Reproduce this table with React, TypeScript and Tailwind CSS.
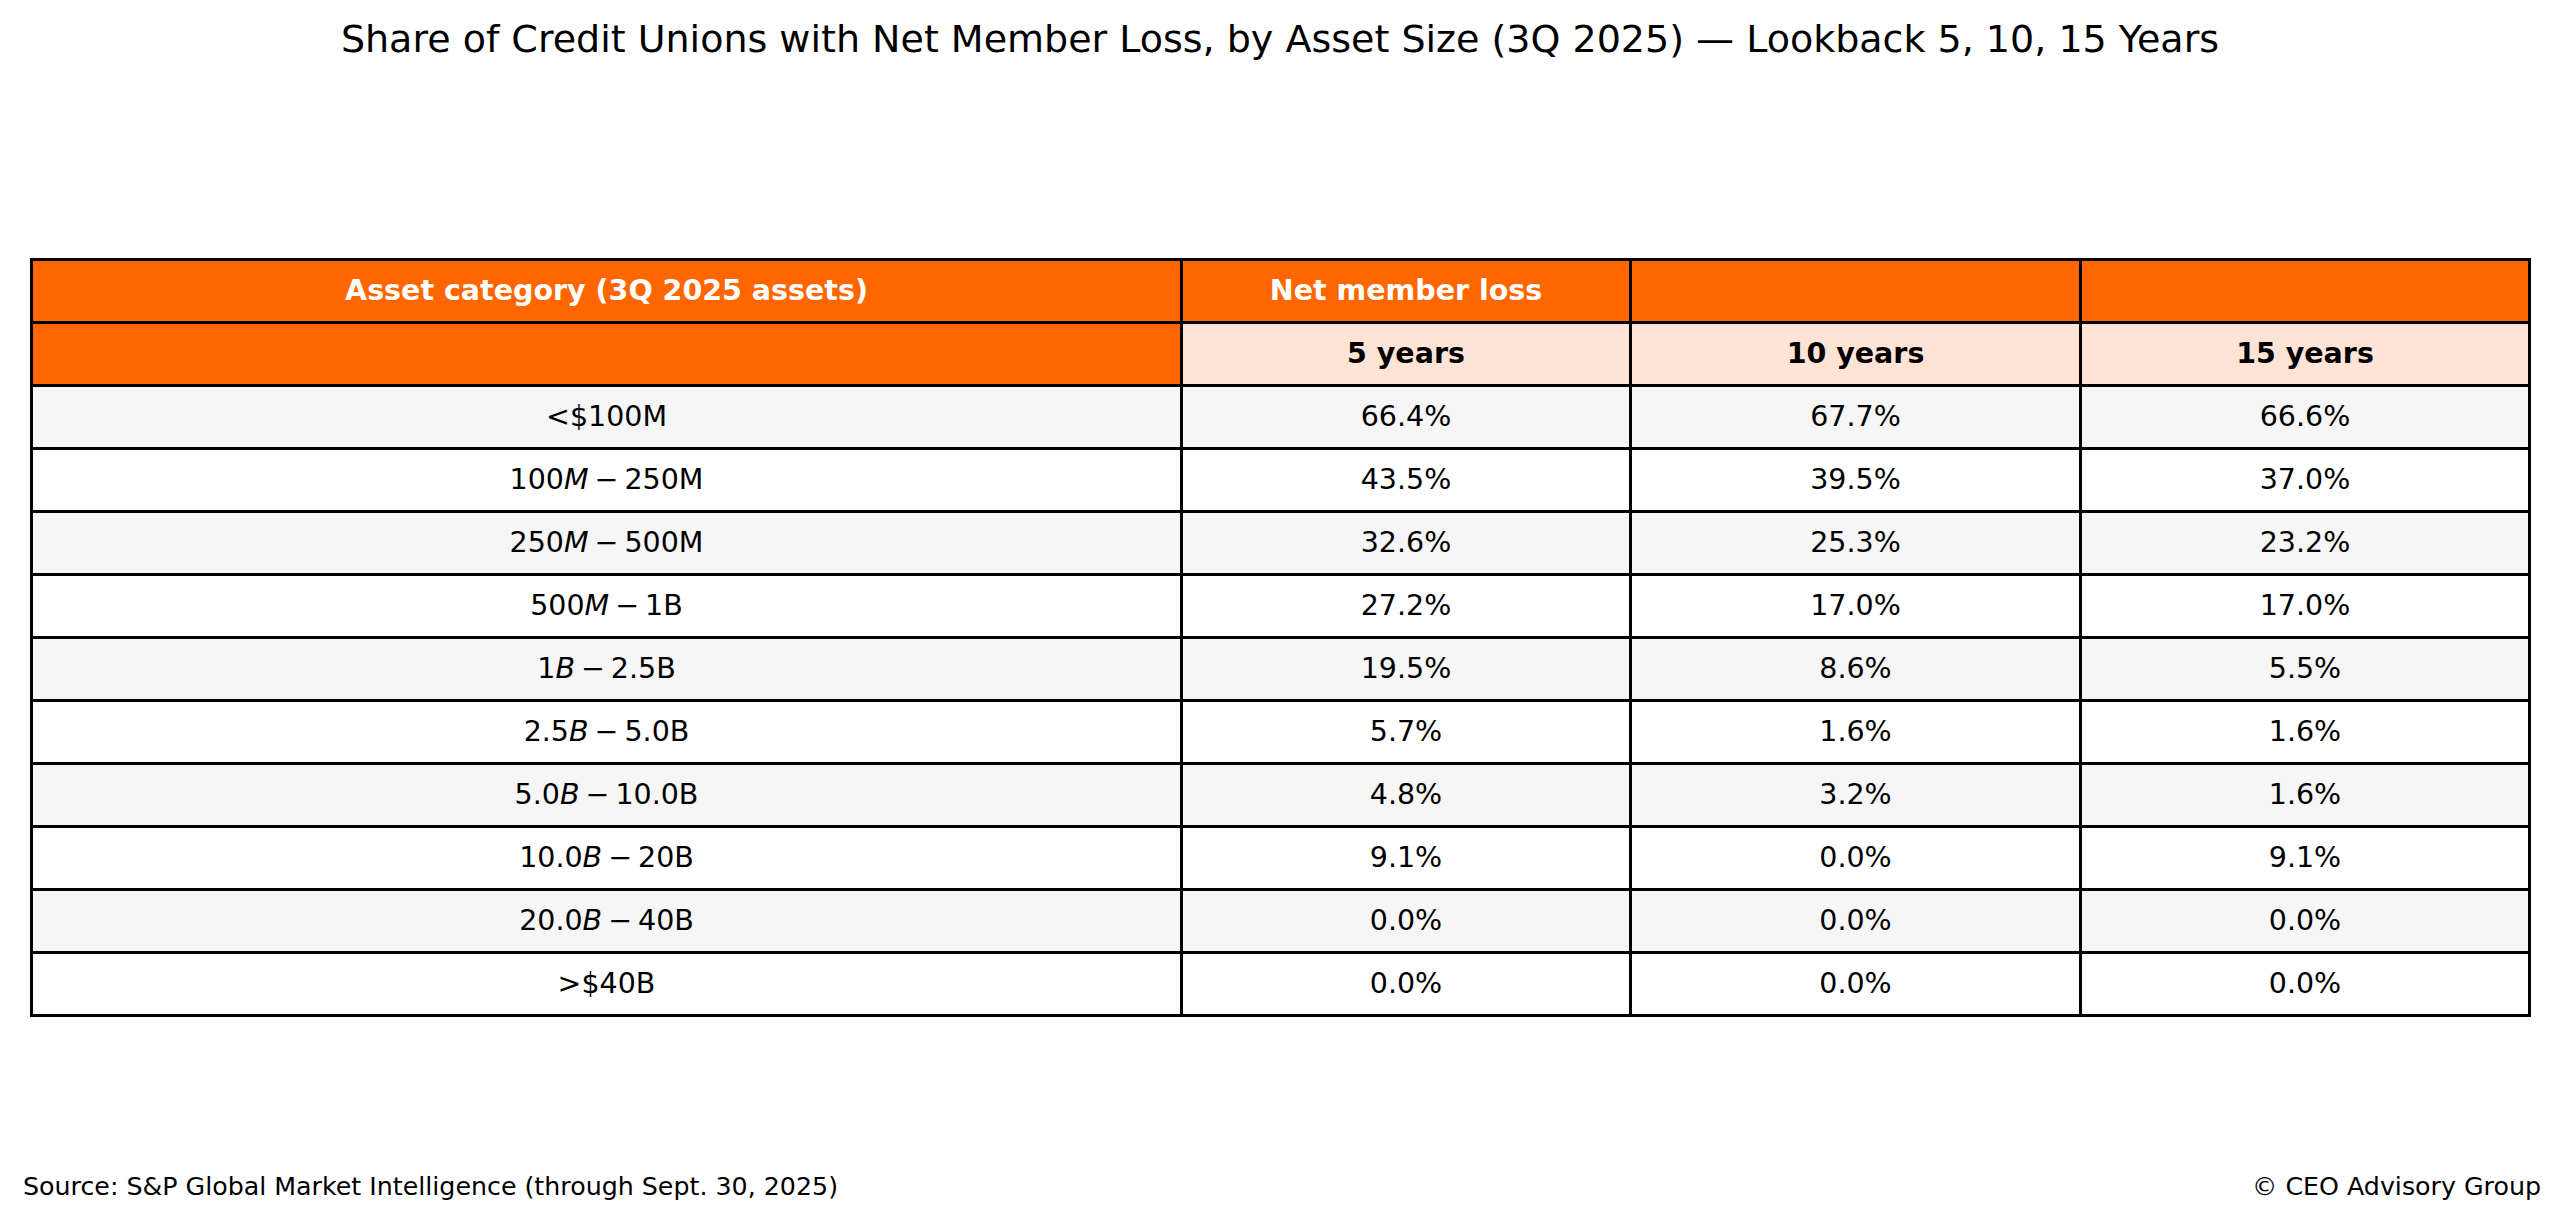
import React from "react";

type Row = { label: React.ReactNode; v: [string, string, string] };

const Rng = ({ a, u, b }: { a: string; u: string; b: string }) => (
  <span>
    {a}
    <i>{u}</i>
    <span className="px-[6px]">−</span>
    {b}
  </span>
);

const rows: Row[] = [
  { label: "<$100M", v: ["66.4%", "67.7%", "66.6%"] },
  { label: <Rng a="100" u="M" b="250M" />, v: ["43.5%", "39.5%", "37.0%"] },
  { label: <Rng a="250" u="M" b="500M" />, v: ["32.6%", "25.3%", "23.2%"] },
  { label: <Rng a="500" u="M" b="1B" />, v: ["27.2%", "17.0%", "17.0%"] },
  { label: <Rng a="1" u="B" b="2.5B" />, v: ["19.5%", "8.6%", "5.5%"] },
  { label: <Rng a="2.5" u="B" b="5.0B" />, v: ["5.7%", "1.6%", "1.6%"] },
  { label: <Rng a="5.0" u="B" b="10.0B" />, v: ["4.8%", "3.2%", "1.6%"] },
  { label: <Rng a="10.0" u="B" b="20B" />, v: ["9.1%", "0.0%", "9.1%"] },
  { label: <Rng a="20.0" u="B" b="40B" />, v: ["0.0%", "0.0%", "0.0%"] },
  { label: ">$40B", v: ["0.0%", "0.0%", "0.0%"] },
];

const cell = "border-[3px] border-black h-[63px] p-0 text-center align-middle";

export default function App() {
  return (
    <div
      className="h-[1223px] w-[2560px] bg-white text-black flex flex-col"
      style={{ fontFamily: '"DejaVu Sans", Verdana, sans-serif' }}
    >
      <h1 className="text-center text-[38px] leading-[44px] pt-[17px]">
        Share of Credit Unions with Net Member Loss, by Asset Size (3Q 2025) — Lookback 5, 10, 15 Years
      </h1>

      <div className="mt-[197px] pl-[30px]">
        <table className="table-fixed border-collapse w-[2498px] text-[28.5px]">
          <colgroup>
            <col className="w-[1150px]" />
            <col className="w-[449px]" />
            <col className="w-[450px]" />
            <col className="w-[449px]" />
          </colgroup>
          <thead>
            <tr className="bg-[#ff6600] text-white font-bold">
              <td className={cell}>Asset category (3Q 2025 assets)</td>
              <td className={cell}>Net member loss</td>
              <td className={cell}></td>
              <td className={cell}></td>
            </tr>
            <tr className="font-bold">
              <td className={`${cell} bg-[#ff6600]`}></td>
              <td className={`${cell} bg-[#ffe4d6]`}>5 years</td>
              <td className={`${cell} bg-[#ffe4d6]`}>10 years</td>
              <td className={`${cell} bg-[#ffe4d6]`}>15 years</td>
            </tr>
          </thead>
          <tbody>
            {rows.map((r, i) => (
              <tr key={i} className={i % 2 === 0 ? "bg-[#f6f6f6]" : "bg-white"}>
                <td className={cell}>{r.label}</td>
                {r.v.map((x, j) => (
                  <td key={j} className={cell}>
                    {x}
                  </td>
                ))}
              </tr>
            ))}
          </tbody>
        </table>
      </div>

      <div className="mt-auto flex justify-between items-center pl-[23px] pr-[19px] pb-[22px] text-[25.3px] leading-[28px]">
        <span>Source: S&amp;P Global Market Intelligence (through Sept. 30, 2025)</span>
        <span>© CEO Advisory Group</span>
      </div>
    </div>
  );
}
